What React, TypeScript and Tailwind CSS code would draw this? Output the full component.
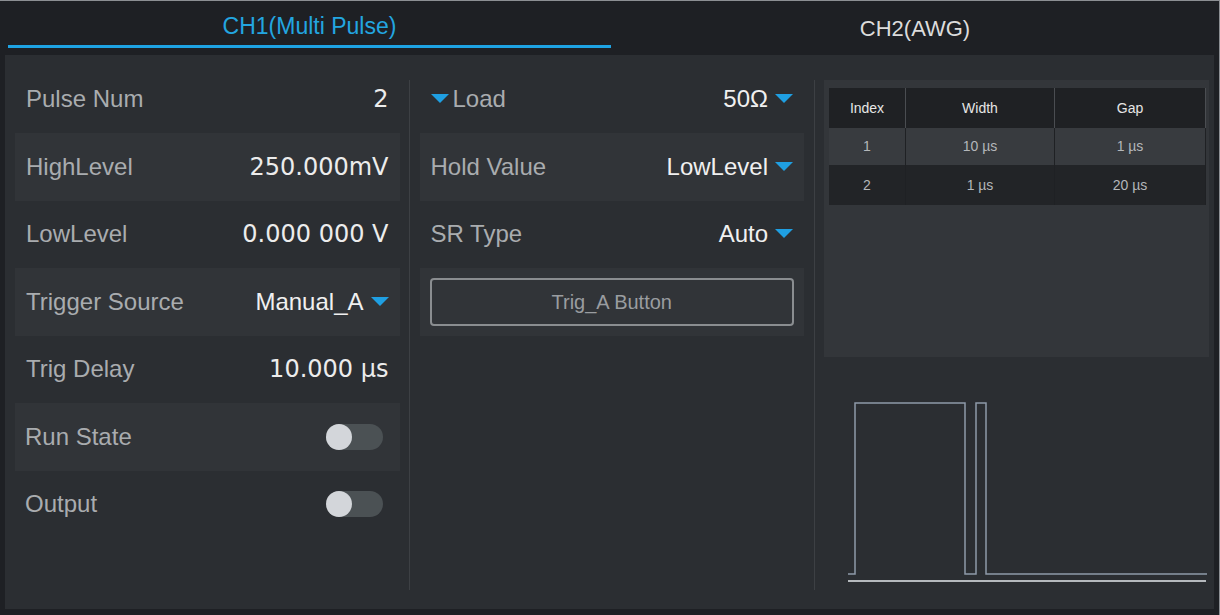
import React from "react";

type RowProps = {
    label: string;
    shaded?: boolean;
    children?: React.ReactNode;
    lead?: boolean;
};

function Caret() {
    return (
        <svg width="18" height="10" viewBox="0 0 18 10" className="shrink-0">
            <polygon points="0,0 18,0 9,9" fill="#1f9fe2" />
        </svg>
    );
}

function Toggle() {
    return (
        <div className="relative h-[26px] w-[57px] rounded-full bg-[#4b5154]">
            <div className="absolute left-0 top-0 h-[26px] w-[26px] rounded-full bg-[#d3d6da]" />
        </div>
    );
}

function Row({ label, shaded, children, lead }: RowProps) {
    return (
        <div
            className={`flex h-[67.5px] items-center justify-between pl-[11px] pr-[11px] ${
                shaded ? "bg-[#313438]" : ""
            }`}
        >
            <div className="flex items-center gap-[4px] text-[24px] text-[#a9acaf]">
                {lead && <Caret />}
                <span>{label}</span>
            </div>
            {children}
        </div>
    );
}

function NumValue({ v }: { v: string }) {
    return (
        <span className="font-['DejaVu_Sans',sans-serif] text-[24px] text-[#ececec]">{v}</span>
    );
}

function DropValue({ v }: { v: string }) {
    return (
        <div className="flex items-center gap-[7px] text-[24px] text-[#f0f0f0]">
            <span>{v}</span>
            <Caret />
        </div>
    );
}

const pulses = [
    { index: 1, width: "10 µs", gap: "1 µs" },
    { index: 2, width: "1 µs", gap: "20 µs" },
];

function PulseTable() {
    return (
        <div className="h-[277px] w-[385px] bg-[#33363a] pl-[5px] pt-[8px]">
            <div className="w-[377px] text-center text-[14px]">
                <div className="flex h-[40px] items-center bg-[#1f2124] text-[#e6e6e6]">
                    <div className="flex h-full w-[77px] items-center justify-center border-r border-[#4a4d51]">
                        Index
                    </div>
                    <div className="flex h-full w-[149px] items-center justify-center border-r border-[#4a4d51]">
                        Width
                    </div>
                    <div className="flex h-full flex-1 items-center justify-center border-r border-[#4a4d51]">
                        Gap
                    </div>
                </div>
                {pulses.map((p, i) => (
                    <div
                        key={p.index}
                        className={`flex items-center text-[#b4b7ba] ${
                            i % 2 === 0 ? "h-[37px] bg-[#383b3f]" : "h-[40px] bg-[#222427]"
                        }`}
                    >
                        <div className="flex h-full w-[77px] items-center justify-center border-r border-[#1f2124]">
                            {p.index}
                        </div>
                        <div className="flex h-full w-[149px] items-center justify-center border-r border-[#1f2124]">
                            {p.width}
                        </div>
                        <div className="flex h-full flex-1 items-center justify-center border-r border-[#1f2124]">
                            {p.gap}
                        </div>
                    </div>
                ))}
            </div>
        </div>
    );
}

function Waveform() {
    return (
        <svg width="390" height="200" viewBox="0 0 390 200" className="mt-[33px] block">
            <path
                d="M24 184 H31 V13 H141 V184 H152 V13 H162 V184 H383"
                fill="none"
                stroke="#8f9aa9"
                strokeWidth="1.5"
            />
            <line x1="24" y1="191" x2="382" y2="191" stroke="#b5b9bd" strokeWidth="2" />
        </svg>
    );
}

export default function App() {
    return (
        <div className="flex h-[615px] w-[1220px] flex-col overflow-hidden border-t border-r border-[#8c8f93] bg-[#1e2024] font-['Liberation_Sans',Arial,sans-serif]">
            {/* tabs */}
            <div className="flex h-[54px] shrink-0">
                <div className="ml-[8px] flex h-[47px] w-[603px] items-center justify-center border-b-[3px] border-[#1ea3e3] pt-[7px] text-[23px] text-[#23a6e0]">
                    CH1(Multi Pulse)
                </div>
                <div className="flex h-[47px] flex-1 items-center justify-center pt-[7px] text-[22px] text-[#dcdcdc]">
                    CH2(AWG)
                </div>
            </div>

            {/* body */}
            <div className="mx-[5px] mb-[6px] flex flex-1 bg-[#2b2e32]">
                <div className="ml-[10px] mt-[10.5px] w-[385px]">
                    <Row label="Pulse Num">
                        <NumValue v="2" />
                    </Row>
                    <Row label="HighLevel" shaded>
                        <NumValue v="250.000mV" />
                    </Row>
                    <Row label="LowLevel">
                        <NumValue v="0.000 000 V" />
                    </Row>
                    <Row label="Trigger Source" shaded>
                        <DropValue v="Manual_A" />
                    </Row>
                    <Row label="Trig Delay">
                        <NumValue v="10.000 µs" />
                    </Row>
                    <div className="flex h-[67.5px] items-center justify-between bg-[#313438] pl-[10px] pr-[17px]">
                        <span className="text-[24px] text-[#a9acaf]">Run State</span>
                        <Toggle />
                    </div>
                    <div className="flex h-[67.5px] items-center justify-between pl-[10px] pr-[17px]">
                        <span className="text-[24px] text-[#a9acaf]">Output</span>
                        <Toggle />
                    </div>
                </div>

                <div className="mb-[19px] ml-[9px] mt-[25px] w-px bg-[#3d4044]" />

                <div className="ml-[10px] mt-[10.5px] w-[385px]">
                    <Row label="Load" lead>
                        <DropValue v="50Ω" />
                    </Row>
                    <Row label="Hold Value" shaded>
                        <DropValue v="LowLevel" />
                    </Row>
                    <Row label="SR Type">
                        <DropValue v="Auto" />
                    </Row>
                    <div className="flex h-[67.5px] items-center bg-[#313438] px-[10px]">
                        <button className="h-[48px] w-full rounded-[4px] border-2 border-[#8a8d90] text-[20px] text-[#9a9da0]">
                            Trig_A Button
                        </button>
                    </div>
                </div>

                <div className="mb-[19px] ml-[10px] mt-[25px] w-px bg-[#3d4044]" />

                <div className="ml-[9px] mt-[25px] flex flex-col">
                    <PulseTable />
                    <Waveform />
                </div>
            </div>
        </div>
    );
}
